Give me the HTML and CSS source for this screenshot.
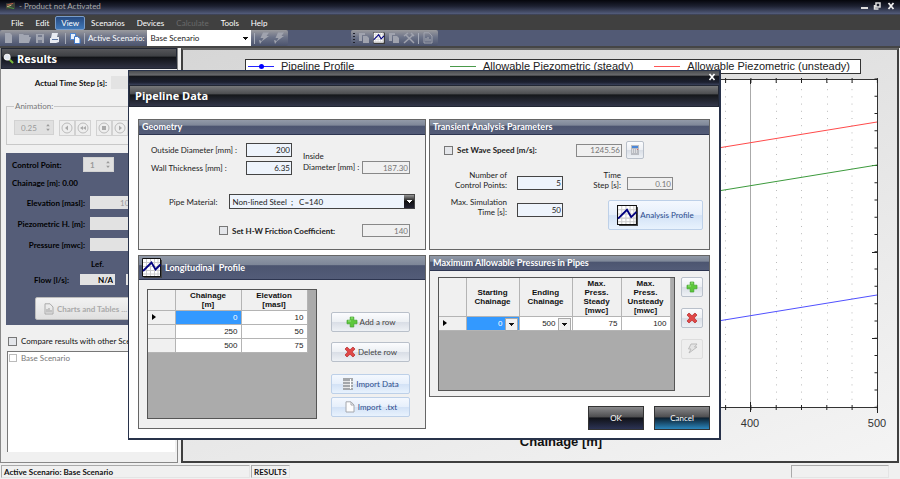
FILE: index.html
```html
<!DOCTYPE html>
<html lang="en">
<head>
<meta charset="utf-8">
<title>Pipeline Data</title>
<link rel="stylesheet" href="styles.css">
</head>
<body>
<svg class="defs" aria-hidden="true">
  <symbol id="i-chart" viewBox="0 0 20 20">
    <path fill="#444" d="M2 2h18v18H2z"/><path fill="#fff" stroke="#111" d="M.5.5h18v18H.5z"/>
    <path stroke="#ccc" fill="none" d="M4.500 1v17M8.500 1v17M12.500 1v17M16 1v17M1 4.500h17M1 8.500h17M1 12.500h17M1 16h17"/>
    <path fill="none" stroke="#00007f" stroke-width="1.800" d="M1 13l8.500-8.500 4 7 5-5"/>
  </symbol>
  <symbol id="i-plus" viewBox="0 0 12 12"><path fill="#5cc83c" stroke="#3fa02c" stroke-width=".7" d="M4.200 1h3.600v3.200H11v3.600H7.800V11H4.200V7.800H1V4.200h3.200z"/><path stroke="#9be67f" d="M5 2h2M2 5h3" /></symbol>
  <symbol id="i-cross" viewBox="0 0 12 12"><path fill="#e04848" stroke="#b52a2a" stroke-width=".7" d="M3 1l3 2.800L9 1l2 2-2.800 3L11 9l-2 2-3-2.800L3 11 1 9l2.800-3L1 3z"/></symbol>
  <symbol id="i-doc" viewBox="0 0 10 12"><path fill="#fdfdfd" stroke="#a5a8ae" d="M1 .8h5L9 4v7H1z"/><path fill="none" stroke="#a5a8ae" d="M6 1v3h3"/></symbol>
  <symbol id="i-report" viewBox="0 0 10 12"><path fill="none" stroke="currentColor" d="M1 .8h5L9 4v7H1z"/><path stroke="currentColor" stroke-width="1.200" d="M3 9.500V6M5 9.500V5M7 9.500V7"/></symbol>
  <symbol id="i-bolt" viewBox="0 0 12 12"><path fill="currentColor" d="M5 .5h6L8.500 4H11L3.500 9.500 5.500 6H2.500zM1 8l3 1-2 3z"/></symbol>
  <symbol id="i-copy" viewBox="0 0 12 12"><path fill="currentColor" d="M1 1h6v2H4v6H1z"/><path fill="currentColor" d="M5 4h4l2 2v5H5z"/></symbol>
  <symbol id="i-spin" viewBox="0 0 6 10"><path fill="currentColor" d="M3 1l2 2.500H1zM3 9L1 6.500h4z"/></symbol>
</svg>

<header class="titlebar">
  <svg class="app-icon" viewBox="0 0 10 8"><path fill="#3d4338" d="M0 1l10-1v7L0 8z"/><path stroke="#c65b4a" d="M1 3l7-2"/><path stroke="#4d9a4a" d="M2 5l7 2"/><path stroke="#d8c98f" d="M1 5l5-2"/></svg>
  <span>- Product not Activated</span>
  <svg class="win-controls" viewBox="0 0 34 10"><path fill="#ddd" d="M0 6h7v2H0z"/><path fill="none" stroke="#ddd" stroke-width="1.500" d="M15 2h4v4h-4zM13.500 4v4h4"/><path stroke="#eee" stroke-width="1.800" d="M27.500 2l5 6M32.500 2l-5 6"/></svg>
</header>

<nav class="menubar">
  <a href="#">File</a><a href="#">Edit</a><a href="#" class="active">View</a><a href="#">Scenarios</a><a href="#">Devices</a><a href="#" class="off">Calculate</a><a href="#">Tools</a><a href="#">Help</a>
</nav>

<div class="toolbar">
  <div class="strip">
    <svg class="tb-files" viewBox="0 0 56 12">
      <path fill="#a2a6b2" d="M1 1h5l2 2v8H1zM15 2h4l1 1h5v2h2l-2 6H15zM32 2h8v9h-8z"/><path fill="#777d90" d="M34 3h4v2h-4zM34 8h4v3h-4z"/>
      <path fill="#e8ebf2" d="M48 1h6l-1 4h2v5l-3 1h-6V6h1z"/><path fill="#5c77a6" d="M48 7h6v1h-6z"/>
    </svg>
    <i class="sep"></i>
    <svg class="tb-icon" viewBox="0 0 12 12"><path fill="#4f86cf" d="M1 1h6v7H1z"/><path fill="#e8effa" d="M2 2h4v5H2z"/><path fill="#f5f9ff" stroke="#3f78c8" d="M5.500 4.500h3l2.500 2v5H5.500z"/></svg>
    <i class="sep"></i>
    <label for="scenario">Active Scenario:</label>
    <span class="combo white"><select id="scenario"><option>Base Scenario</option></select></span>
    <i class="sep"></i>
    <svg class="tb-icon dim"><use href="#i-bolt"/></svg>
    <svg class="tb-icon dim"><use href="#i-bolt"/></svg>
  </div>
  <div class="strip second">
    <i class="grip"></i>
    <svg class="tb-icon dim"><use href="#i-copy"/></svg>
    <svg class="tb-icon"><use href="#i-chart"/></svg>
    <svg class="tb-icon dim"><use href="#i-copy"/></svg>
    <svg class="tb-icon dim" viewBox="0 0 12 12"><path stroke="currentColor" stroke-width="1.500" d="M1 11l9-8M3 3l8 8M1 4l4-3M8 1l3 3"/></svg>
    <i class="sep"></i>
    <svg class="tb-icon dim"><use href="#i-report"/></svg>
  </div>
</div>

<main class="work">
  <section class="results">
    <h2><svg class="mag" viewBox="0 0 12 12"><path stroke="#79b83c" stroke-width="2.200" d="M7 7l4 4"/><circle cx="4.500" cy="4.500" r="3.200" fill="#dfe5ee" stroke="#f4f4f4" stroke-width="1.200"/></svg>Results</h2>
    <div class="time-step"><label for="ats">Actual Time Step [s]:</label><input id="ats" disabled></div>
    <fieldset class="anim">
      <legend>Animation:</legend>
      <span class="spin"><input value="0.25" aria-label="Animation speed" disabled><svg><use href="#i-spin"/></svg></span>
      <span class="players">
        <button aria-label="Step back" disabled><svg viewBox="0 0 12 12"><circle cx="6" cy="6" r="5"/><path d="M7 3.500v5L4 6z"/></svg></button>
        <button aria-label="Rewind" disabled><svg viewBox="0 0 12 12"><circle cx="6" cy="6" r="5"/><path d="M6 4v4L3 6zM9 4v4L6 6z"/></svg></button>
      </span>
      <span class="players">
        <button aria-label="Stop" disabled><svg viewBox="0 0 12 12"><circle cx="6" cy="6" r="5"/><path d="M4 4h4v4H4z"/></svg></button>
        <button aria-label="Play" disabled><svg viewBox="0 0 12 12"><circle cx="6" cy="6" r="5"/><path d="M5 3.500v5L8 6z"/></svg></button>
      </span>
    </fieldset>
    <div class="readings">
      <div class="cp"><label for="cp">Control Point:</label><span class="spin small"><input id="cp" value="1" disabled><svg><use href="#i-spin"/></svg></span></div>
      <p>Chainage [m]: 0.00</p>
      <div class="rd"><label for="el">Elevation [masl]:</label><input id="el" value="10" disabled></div>
      <div class="rd"><label for="pz">Piezometric H. [m]:</label><input id="pz" disabled></div>
      <div class="rd"><label for="pr">Pressure [mwc]:</label><input id="pr" disabled></div>
      <div class="flow"><span></span><span class="lef">Lef.</span><span></span>
        <label for="fl">Flow [l/s]:</label><input id="fl" value="N/A" readonly><input aria-label="Flow right" readonly></div>
      <button class="charts" disabled><svg><use href="#i-report"/></svg>Charts and Tables ...</button>
    </div>
    <label class="check compare"><input type="checkbox">Compare results with other Scenarios</label>
    <div class="list"><label class="check"><input type="checkbox" disabled>Base Scenario</label></div>
  </section>

  <section class="chart">
    <div class="legend">
      <span><i class="key blue"></i>Pipeline Profile</span>
      <span><i class="key green"></i>Allowable Piezometric (steady)</span>
      <span><i class="key red"></i>Allowable Piezometric (unsteady)</span>
    </div>
    <svg class="plot" viewBox="183 74 714 386">
      <path fill="#fff" d="M244 79h633.500v328H244z"/>
      <path class="dots" d="M725.500 82v322M776.500 82v322M801.500 82v322M827.500 82v322M852 82v322"/>
      <path stroke="#aaa" d="M750.500 79v328"/>
      <path fill="none" stroke="#333" d="M244.500 79.500h633v328h-633z"/>
      <path class="rticks" d="M876 78.500v329"/>
      <path stroke="#222" d="M872 165.500h5M872 252.500h5M872 338.500h5M750.500 402v10M877.500 407v6M750.500 79v5"/>
      <path class="bticks" d="M877.900 407.500H244M877.900 80.500H244"/>
      <path stroke="#ff4a4a" d="M244 225.500L877 122"/>
      <path stroke="#3c9a3c" d="M244 268.500L877 165"/>
      <path stroke="#5050ff" d="M244 398.500L877 295"/>
      <text x="750" y="427" class="tick">400</text>
      <text x="877" y="427" class="tick">500</text>
      <text x="561" y="446" class="axis">Chainage [m]</text>
    </svg>
  </section>
</main>

<footer class="status"><span class="s1">Active Scenario: Base Scenario</span><span class="s2">RESULTS</span><span class="s3"></span></footer>

<dialog open class="dlg">
  <div class="dlg-cap"><button aria-label="Close"><svg viewBox="0 0 8 8"><path stroke="#fff" stroke-width="1.600" d="M1.500 1l5 6M6.500 1l-5 6"/></svg></button></div>
  <h1>Pipeline Data</h1>
  <div class="dlg-body">
    <div class="col">
      <section class="group geometry">
        <h3>Geometry</h3>
        <div class="geo">
          <label for="od">Outside Diameter [mm] :</label><input id="od" class="num" value="200">
          <label for="id" class="inside">Inside<br>Diameter [mm] :</label>
          <label for="wt">Wall Thickness [mm] :</label><input id="wt" class="num" value="6.35">
          <input id="id" class="num off idv" value="187.30" readonly>
        </div>
        <div class="material"><label for="mat">Pipe Material:</label><span class="combo"><select id="mat"><option>Non-lined Steel&nbsp; ;&nbsp;&nbsp; C=140</option></select></span></div>
        <div class="friction"><label class="check bold"><input type="checkbox">Set H-W Friction Coefficient:</label><input class="num off" value="140" aria-label="Friction coefficient" readonly></div>
      </section>
      <section class="group">
        <h3 class="tall"><svg><use href="#i-chart"/></svg>Longitudinal&nbsp; Profile</h3>
        <div class="profile">
          <div class="grid-box">
            <table>
              <colgroup><col class="c-h"><col class="c-l"><col class="c-l"></colgroup>
              <thead><tr><th></th><th>Chainage<br>[m]</th><th>Elevation<br>[masl]</th></tr></thead>
              <tbody>
                <tr><th><i class="cur"></i></th><td class="sel">0</td><td>10</td></tr>
                <tr><th></th><td>250</td><td>50</td></tr>
                <tr><th></th><td>500</td><td>75</td></tr>
              </tbody>
            </table>
          </div>
          <div class="actions">
            <button class="btn"><svg><use href="#i-plus"/></svg>Add a row</button>
            <button class="btn"><svg><use href="#i-cross"/></svg>Delete row</button>
            <button class="btn blue"><svg viewBox="0 0 12 12"><path fill="#a4a7ab" d="M1 0h10v12H1z"/><path stroke="#e8e8e8" d="M1 3.500h10M1 6.500h10M1 9.500h10"/><path stroke="#fff" d="M8.500 1v10"/></svg>Import Data</button>
            <button class="btn blue"><svg><use href="#i-doc"/></svg>Import&nbsp; .txt</button>
          </div>
        </div>
      </section>
    </div>
    <div class="col">
      <section class="group transient">
        <h3>Transient Analysis Parameters</h3>
        <div class="wave">
          <label class="check bold"><input type="checkbox">Set Wave Speed [m/s]:</label>
          <input class="num off" value="1245.56" aria-label="Wave speed" readonly>
          <button class="btn calc" aria-label="Calculator"><svg viewBox="0 0 10 10"><path fill="#b9bcc2" d="M1 0h8v10H1z"/><path fill="#4a86d8" d="M2 1h6v2H2z"/><path stroke="#fff" stroke-dasharray="1 1" d="M2 5h6M2 7h6"/><path fill="#d66" d="M7 4h1v1H7z"/></svg></button>
        </div>
        <div class="params">
          <div class="pair"><label for="ncp">Number of<br>Control Points:</label><input id="ncp" class="num" value="5"></div>
          <div class="pair"><label for="ts">Time<br>Step [s]:</label><input id="ts" class="num off" value="0.10" readonly></div>
          <div class="pair"><label for="mst">Max. Simulation<br>Time [s]:</label><input id="mst" class="num" value="50"></div>
          <button class="btn blue analysis"><svg><use href="#i-chart"/></svg>Analysis Profile</button>
        </div>
      </section>
      <section class="group">
        <h3>Maximum Allowable Pressures in Pipes</h3>
        <div class="pressures">
          <div class="grid-box">
            <table>
              <colgroup><col class="c-h"><col class="c-m"><col class="c-m"><col class="c-s"><col class="c-s"></colgroup>
              <thead><tr><th></th><th>Starting<br>Chainage</th><th>Ending<br>Chainage</th><th>Max.<br>Press.<br>Steady<br>[mwc]</th><th>Max.<br>Press.<br>Unsteady<br>[mwc]</th></tr></thead>
              <tbody><tr><th><i class="cur"></i></th>
                <td class="sel pick"><select aria-label="Starting chainage"><option>0</option></select></td>
                <td class="pick"><select aria-label="Ending chainage"><option>500</option></select></td>
                <td>75</td><td>100</td></tr></tbody>
            </table>
          </div>
          <div class="side">
            <button class="btn" aria-label="Add"><svg><use href="#i-plus"/></svg></button>
            <button class="btn" aria-label="Delete"><svg><use href="#i-cross"/></svg></button>
            <button class="btn ghost" aria-label="Recalculate" disabled><svg viewBox="0 0 12 12"><path fill="#e4e4e4" stroke="#bbb" d="M5 1h6L8.500 4H11L3 10l2-4H2.500z"/></svg></button>
          </div>
        </div>
      </section>
      <div class="ends"><button class="end">OK</button><button class="end cancel">Cancel</button></div>
    </div>
  </div>
</dialog>
</body>
</html>
```
FILE: styles.css
```css
* { box-sizing: border-box; }
body {
  margin: 0; min-height: 100vh; display: flex; flex-direction: column; position: relative;
  background: #525a75; color: #111;
  font: 8px/10px Lato, "Open Sans", sans-serif;
}
.defs { position: absolute; width: 0; height: 0; }
svg { display: block; flex: none; }
input, select, button { font: inherit; color: inherit; margin: 0; padding: 0; min-width: 0; border-radius: 0; }
h1, h2, h3, p { margin: 0; }
input:not([type="checkbox"]) { border: 0; background: #e2e2e2; }

/* Window chrome */
.titlebar { display: flex; align-items: center; gap: 4px; height: 15px; padding: 0 5px 3px 6px; color: #aaa; background: linear-gradient(#05060c, #1c2030 40%, #525b7a 92%, #30333d); }
.app-icon { width: 9px; height: 8px; }
.win-controls { width: 34px; height: 10px; margin-left: auto; }
.menubar { display: flex; align-items: center; height: 15px; padding-left: 5px; background: #404040; }
.menubar a { color: #fff; text-decoration: none; padding: 0 5px; line-height: 12px; border: 1px solid transparent; border-radius: 2px; }
.menubar a.active { background: linear-gradient(#274a80, #3f78b8); border-color: #7a9cc8; }
.menubar a.off { color: #6a6a6a; }
.toolbar { display: flex; align-items: center; height: 18px; border-bottom: 2px solid #454545; }
.strip { display: flex; align-items: center; height: 16px; width: 288px; padding: 0 3px 0 4px; gap: 3px; color: #fff; border-radius: 2px; background: linear-gradient(#9a9a9e, #6c7388 45%, #4b536d); }
.strip.second { width: 87px; margin-left: 63px; padding-left: 2px; }
.tb-files { width: 56px; height: 12px; margin-right: 2px; }
.tb-icon { width: 12px; height: 12px; }
.dim { color: #a0a3ae; }
.sep { width: 1px; height: 11px; background: #a6abb8; }
.grip { width: 2px; height: 11px; background: repeating-linear-gradient(#20222c 0 1px, transparent 1px 3px); }
.combo { position: relative; display: inline-flex; background: #eef4fc; border: 1px solid #444; }
.combo select { appearance: none; flex: 1; border: 0; background: none; padding: 0 12px 0 2px; color: #222; }
.combo::after { content: ""; position: absolute; right: 0; top: 0; bottom: 0; width: 10px; pointer-events: none; background: conic-gradient(from 315deg at 50% 100%, #fff 90deg, transparent 0) center / 5px 3px no-repeat, linear-gradient(#999, #111 50%, #223); }
.combo.white { flex: 1; height: 16px; background: #fff; border-color: #fff; }
.combo.white::after { background: conic-gradient(from 315deg at 50% 100%, #111 90deg, transparent 0) center / 5px 3px no-repeat; }

/* Work area */
.work { flex: 1; display: flex; gap: 3px; padding: 0 1px 2px 0; background: #f0f0f0; }
.results { width: 178px; flex: none; padding: 0 2px 10px 1px; background: #f0f0f0; border: solid #888; border-width: 0 1px 1px; }
h1, h2 { display: flex; align-items: center; color: #fff; font: bold 11px/20px "Open Sans", sans-serif; background: linear-gradient(#55565a, #3e4044 38%, #101216 42%, #2f3243); border: 1px solid #222734; }
h2 { height: 21px; gap: 3px; padding-left: 1px; margin: 0 -2px 0 -1px; }
.mag { width: 11px; height: 11px; }
.time-step { display: flex; align-items: center; justify-content: flex-end; gap: 4px; margin-top: 7px; font-weight: bold; }
.time-step input { width: 64px; height: 13px; background: #e3e3e3; }
.anim { display: flex; align-items: center; margin: 13px 0 0 4px; padding: 7px 7px 7px; border: 1px solid #c8c8c8; color: #888; height: 43px; }
.anim legend { padding: 0 1px; color: #777; line-height: 9px; }
.spin { position: relative; display: flex; width: 40px; height: 15px; color: #999; }
.spin input { width: 100%; padding-left: 6px; background: #e0e0e0; border: 1px solid #d2d2d2; }
.spin svg { position: absolute; right: 3px; top: 3px; width: 6px; height: 9px; }
.spin.small { width: 31px; }
.players { display: flex; margin-left: 5px; }
.players button { width: 16px; height: 16px; border: 1px solid #d2d2d2; background: #eee; display: grid; place-items: center; }
.players svg { width: 12px; height: 12px; }
.players circle { fill: none; stroke: #bbb; }
.players path { fill: #aaa; }
.readings { margin: 8px 0 0 4px; padding: 4px 0 5px 6px; background: #555d78; height: 172px; font-weight: bold; color: #000; }
.cp { display: flex; align-items: center; gap: 20px; height: 15px; }
.cp label { width: 51px; white-space: nowrap; }
.readings p { margin: 6px 0 8px; }
.rd { display: grid; grid-template-columns: 73px 1fr; gap: 5px; height: 13px; margin-bottom: 8px; align-items: center; text-align: right; white-space: nowrap; }
.rd input { height: 13px; padding-left: 30px; color: #999; font-weight: normal; }
.flow { display: grid; grid-template-columns: 51px 35px 1fr; column-gap: 11px; row-gap: 5px; align-items: center; padding-left: 6px; }
.flow label { text-align: right; }
.flow input { height: 11px; text-align: right; padding-right: 2px; width: 100%; }
.lef { text-align: center; }
.charts { display: flex; align-items: center; gap: 3px; width: 130px; height: 23px; margin: 12px 0 0 23px; padding-left: 8px; color: #aaa; background: linear-gradient(#f2f2f2, #e0e0e0); border: 1px solid #bbb; border-radius: 2px; }
.charts svg { width: 10px; height: 12px; }
.check { display: flex; align-items: center; gap: 4px; white-space: nowrap; }
.check input { appearance: none; width: 9px; height: 9px; border: 1px solid #777; background: #e4e6ea; }
.check.bold { font-weight: bold; }
.compare { margin: 11px 0 5px 6px; overflow: hidden; }
.list { margin: 0 0 0 5px; height: 101px; background: #fff; border: solid #777; border-width: 1px 0 0 1px; padding: 1px; color: #777; }
.list input { width: 8px; height: 8px; border-color: #bbb; background: #fff; }

.chart { flex: 1; display: flex; flex-direction: column; border: 2px solid #3f3f3f; border-top-color: #666; background: linear-gradient(160deg, #d6d6d6, #f4f4f4); }
.legend { display: flex; gap: 21px; align-items: center; margin: 9px 36px 0 62px; height: 15px; padding: 0 10px 0 2px; background: #fff; border: 1px solid #333; font: 11px/13px "Liberation Sans", sans-serif; color: #222; }
.legend span { display: flex; align-items: center; gap: 7px; }
.legend span:first-child { margin-right: auto; }
.key { width: 26px; height: 1px; position: relative; }
.key.blue { background: #22f; }
.key.blue::after { content: ""; position: absolute; left: 11px; top: -2px; width: 5px; height: 5px; border-radius: 50%; background: #00f; }
.key.green { background: #4a9a4a; }
.key.red { background: #f55; }
.plot { width: 100%; height: auto; }
.dots { stroke: #bbb; stroke-dasharray: 1 6.2; fill: none; }
.rticks { stroke: #222; stroke-width: 3; stroke-dasharray: 1 16.28; }
.bticks { stroke: #222; stroke-width: 5; stroke-dasharray: 1 24.3; }
.tick { font: 11px "Liberation Sans", sans-serif; text-anchor: middle; fill: #333; }
.axis { font: bold 13px "Liberation Sans", sans-serif; text-anchor: middle; fill: #111; }

.status { display: flex; height: 15px; background: #f0f0f0; font-weight: bold; line-height: 13px; padding: 0 11px 2px 1px; gap: 1px; }
.status span { border: 1px solid; border-color: #aaa #e4e4e4 #e4e4e4 #aaa; padding-left: 2px; }
.s1 { width: 249px; }
.s2 { width: 39px; }
.s3 { width: 98px; margin-left: auto; }

/* Dialog */
.dlg { position: absolute; left: 128px; top: 70px; width: 593px; margin: 0; padding: 0; color: #222; background: #fff; border: 1px solid #28324a; border-bottom-width: 2px; border-right-width: 2px; }
.dlg-cap { height: 14px; display: flex; justify-content: flex-end; padding: 2px 3px; background: linear-gradient(#4a4c50, #6a6b6e 30%, #15171c 36%, #1c2030 80%, #3a415a); }
.dlg-cap button { width: 8px; height: 8px; border: 0; background: none; }
h1 { height: 22px; padding-left: 5px; background: linear-gradient(#77787a, #4c4d50 40%, #15171a 44%, #33374a); }
.dlg-body { display: grid; grid-template-columns: 288fr 281fr; gap: 3px; padding: 12px 9px 8px 9px; }
.col { display: flex; flex-direction: column; gap: 5px; }
.group { background: #f0f0f0; border: 1px solid #666; }
.geometry, .transient { height: 131px; }
.group h3 { display: flex; align-items: center; gap: 3px; height: 15px; padding-left: 3px; color: #fff; font: bold 9px/14px Lato, "Open Sans", sans-serif; background: linear-gradient(#929aa8, #7e8798 38%, #4c5570 42%, #535c78); border-bottom: 1px solid #2d3550; }
.group h3.tall { height: 24px; }
.tall svg { width: 20px; height: 20px; }
.num { height: 14px; text-align: right; padding-right: 1px; }
input.num { background: #eef4fc; border: 1px solid #444; }
input.num.off { background: #f0f0f0; border-color: #888; color: #777; height: 13px; }
.geo { display: grid; grid-template-columns: 95px 46px 58px 48px; grid-template-rows: 15px 15px; column-gap: 0; row-gap: 3px; padding: 7px 0 0 12px; align-items: center; }
.geo > * { grid-row: 1; }
.geo > :nth-child(4), .geo > :nth-child(5) { grid-row: 2; }
.geo .inside { grid-area: 1 / 3 / 3 / 4; align-self: end; margin-left: 11px; white-space: nowrap; padding-bottom: 2px; line-height: 11px; }
.geo .idv { grid-area: 2 / 4; margin-left: 12px; width: 48px; }
.material { display: flex; align-items: center; gap: 12px; margin: 19px 10px 0 30px; }
.material .combo { flex: 1; height: 15px; }
.friction { display: flex; align-items: center; justify-content: space-between; margin: 15px 15px 0 80px; }
.friction .num, .wave .num { width: 48px; }
.profile { display: flex; gap: 14px; padding: 9px 15px 9px 8px; }
.grid-box { background: #ababab; border: 1px solid #555; }
.profile .grid-box { width: 170px; height: 130px; }
table { table-layout: fixed; border-collapse: collapse; font: 8px/9px "Liberation Sans", sans-serif; width: 0; }
.c-h { width: 27px; } .c-l { width: 66px; } .c-m { width: 53px; } .c-s { width: 49px; }
th { background: #f0f0f0; border: solid #b4b4b4; border-width: 0 1px 1px 0; padding: 0; color: #111; }
thead th { height: 20px; }
td { height: 14px; padding: 0 3px; text-align: right; background: #fff; border: solid #b4b4b4; border-width: 0 1px 1px 0; }
td.sel { background: #3399ff; color: #fff; }
tbody th { text-align: left; }
.cur { display: block; margin-left: 4px; width: 0; border: 3px solid transparent; border-left: 4px solid #000; border-right: 0; }
.actions { flex: 1; display: flex; flex-direction: column; padding-top: 23px; }
.btn { display: flex; align-items: center; justify-content: center; gap: 2px; height: 20px; color: #444; border: 1px solid #b9c0ca; border-radius: 2px; background: linear-gradient(#fbfcfe, #eceff3 50%, #d9dee6 52%, #eef1f5); }
.btn.blue { color: #2c4c8c; border-color: #bdd0e8; background: linear-gradient(#f4f8fe, #e6effb 50%, #d3e2f6 52%, #e8f2fd); }
.btn svg { width: 12px; height: 12px; }
.actions .btn + .btn { margin-top: 10px; }
.actions .btn:nth-child(3) { margin-top: 12px; }
.actions .btn:nth-child(4) { margin-top: 3px; }
.wave { display: flex; align-items: center; padding: 6px 0 0 14px; gap: 4px; }
.wave .check { width: 128px; }
.wave .num { width: 46px; }
.wave .calc { width: 18px; height: 18px; }
.calc svg { width: 10px; height: 10px; }
.params { display: grid; grid-template-columns: 133px 1fr; row-gap: 6px; padding: 10px 6px 0 0; text-align: right; }
.pair { display: grid; grid-template-columns: 1fr 46px; column-gap: 9px; align-items: end; height: 21px; }
.pair:nth-child(2) { grid-template-columns: 58px 46px; column-gap: 6px; }
.pair:nth-child(1) label, .pair:nth-child(3) label { padding-right: 1px; }
.analysis { width: 95px; height: 30px; justify-self: end; margin-top: 4px; }
.btn.analysis svg { width: 21px; height: 21px; }
.pressures { display: flex; gap: 6px; padding: 6px 6px 5px 8px; }
.pressures .grid-box { width: 237px; height: 114px; }
.pressures thead th { height: 38px; }
.pick { position: relative; }
.pick select { appearance: none; width: 100%; border: 0; background: none; text-align-last: right; padding-right: 13px; }
.pick::after { content: ""; position: absolute; right: 1px; top: 1px; width: 11px; height: 11px; pointer-events: none; border: 1px solid #aaa; background: conic-gradient(from 315deg at 50% 100%, #111 90deg, transparent 0) center / 5px 3px no-repeat, #f0f0f0; }
.side { display: flex; flex-direction: column; gap: 11px; flex: 1; }
.side .btn.ghost { border-color: #ddd; background: #eee; }
.ends { display: flex; justify-content: flex-end; gap: 10px; margin-top: 4px; }
.end { width: 56px; height: 24px; color: #fff; border: 1px solid #333; background: linear-gradient(#8a8a8c, #4e4e50 45%, #101218 50%, #2c3354); }
.end.cancel { background: linear-gradient(#8a8a8c, #4e4e50 45%, #0c2030 50%, #2b86bd); }
```
